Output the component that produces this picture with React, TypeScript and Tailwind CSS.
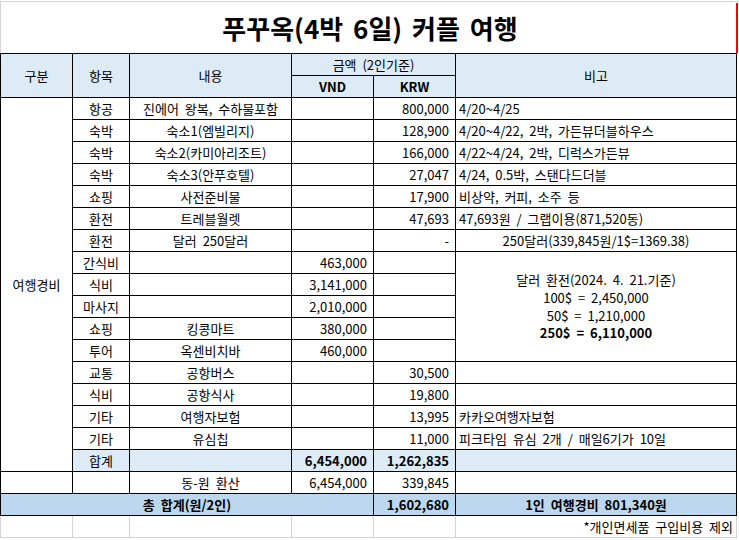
import React from "react";

type Row = {
	item: string;
	desc: string;
	vnd: string;
	krw: string;
	note?: string;
	noteCenter?: boolean;
};

const rows: Row[] = [
	{ item: "항공", desc: "진에어 왕복, 수하물포함", vnd: "", krw: "800,000", note: "4/20~4/25" },
	{ item: "숙박", desc: "숙소1(엠빌리지)", vnd: "", krw: "128,900", note: "4/20~4/22, 2박, 가든뷰더블하우스" },
	{ item: "숙박", desc: "숙소2(카미아리조트)", vnd: "", krw: "166,000", note: "4/22~4/24, 2박, 디럭스가든뷰" },
	{ item: "숙박", desc: "숙소3(안푸호텔)", vnd: "", krw: "27,047", note: "4/24, 0.5박, 스탠다드더블" },
	{ item: "쇼핑", desc: "사전준비물", vnd: "", krw: "17,900", note: "비상약, 커피, 소주 등" },
	{ item: "환전", desc: "트레블월렛", vnd: "", krw: "47,693", note: "47,693원 / 그랩이용(871,520동)" },
	{ item: "환전", desc: "달러 250달러", vnd: "", krw: "-", note: "250달러(339,845원/1$=1369.38)", noteCenter: true },
];

// rows sharing the merged exchange-rate note
const cashRows: Row[] = [
	{ item: "간식비", desc: "", vnd: "463,000", krw: "" },
	{ item: "식비", desc: "", vnd: "3,141,000", krw: "" },
	{ item: "마사지", desc: "", vnd: "2,010,000", krw: "" },
	{ item: "쇼핑", desc: "킹콩마트", vnd: "380,000", krw: "" },
	{ item: "투어", desc: "옥센비치바", vnd: "460,000", krw: "" },
];

const tailRows: Row[] = [
	{ item: "교통", desc: "공항버스", vnd: "", krw: "30,500", note: "" },
	{ item: "식비", desc: "공항식사", vnd: "", krw: "19,800", note: "" },
	{ item: "기타", desc: "여행자보험", vnd: "", krw: "13,995", note: "카카오여행자보험" },
	{ item: "기타", desc: "유심칩", vnd: "", krw: "11,000", note: "피크타임 유심 2개 / 매일6기가 10일" },
];

const cell = "border border-black p-0 h-[22px] whitespace-nowrap align-middle";
const center = `${cell} text-center`;
const right = `${cell} text-right pr-[6px]`;
const left = `${cell} text-left pl-[3px]`;
const head = `${center} bg-[#ddebf7] font-normal`;
const grid = "border-x border-b border-[#d4d4d4] h-[22px] p-0";

export default function App() {
	return (
		<div className="w-[739px] h-[540px] bg-white text-black text-[13px] leading-none [word-spacing:3px] font-['Noto_Sans_CJK_KR','Noto_Sans',sans-serif] pt-[1px] overflow-hidden">
			<div className="relative h-[52px] border-t border-l border-[#d4d4d4] flex items-center justify-center">
				<h1 className="text-[26px] font-bold [word-spacing:4px] pt-[1px]">푸꾸옥(4박 6일) 커플 여행</h1>
				<div className="absolute right-[1px] top-[1px] bottom-0 w-[2px] bg-[#ff0000]" />
			</div>

			<table className="table-fixed border-collapse w-[736px]">
				<colgroup>
					<col className="w-[72px]" />
					<col className="w-[57px]" />
					<col className="w-[162px]" />
					<col className="w-[82px]" />
					<col className="w-[82px]" />
					<col className="w-[281px]" />
				</colgroup>
				<thead>
					<tr>
						<th rowSpan={2} className={head}>구분</th>
						<th rowSpan={2} className={head}>항목</th>
						<th rowSpan={2} className={head}>내용</th>
						<th colSpan={2} className={head}>금액 (2인기준)</th>
						<th rowSpan={2} className={head}>비고</th>
					</tr>
					<tr>
						<th className={`${center} bg-[#ddebf7] font-bold`}>VND</th>
						<th className={`${center} bg-[#ddebf7] font-bold`}>KRW</th>
					</tr>
				</thead>
				<tbody>
					{rows.map((r, i) => (
						<tr key={`a${i}`}>
							{i === 0 && (
								<td rowSpan={17} className={center}>여행경비</td>
							)}
							<td className={center}>{r.item}</td>
							<td className={center}>{r.desc}</td>
							<td className={right}>{r.vnd}</td>
							<td className={right}>{r.krw}</td>
							<td className={r.noteCenter ? center : left}>{r.note}</td>
						</tr>
					))}
					{cashRows.map((r, i) => (
						<tr key={`b${i}`}>
							<td className={center}>{r.item}</td>
							<td className={center}>{r.desc}</td>
							<td className={right}>{r.vnd}</td>
							<td className={right}>{r.krw}</td>
							{i === 0 && (
								<td rowSpan={5} className={`${center} leading-[17.7px]`}>
									<div>달러 환전(2024. 4. 21.기준)</div>
									<div>100$ = 2,450,000</div>
									<div>50$ = 1,210,000</div>
									<div className="font-bold">250$ = 6,110,000</div>
								</td>
							)}
						</tr>
					))}
					{tailRows.map((r, i) => (
						<tr key={`c${i}`}>
							<td className={center}>{r.item}</td>
							<td className={center}>{r.desc}</td>
							<td className={right}>{r.vnd}</td>
							<td className={right}>{r.krw}</td>
							<td className={left}>{r.note}</td>
						</tr>
					))}
					<tr className="bg-[#ddebf7]">
						<td className={center}>합계</td>
						<td className={center}></td>
						<td className={`${right} font-bold`}>6,454,000</td>
						<td className={`${right} font-bold`}>1,262,835</td>
						<td className={left}></td>
					</tr>
					<tr>
						<td className={center}></td>
						<td className={center}></td>
						<td className={center}>동-원 환산</td>
						<td className={right}>6,454,000</td>
						<td className={right}>339,845</td>
						<td className={left}></td>
					</tr>
					<tr className="bg-[#bdd7ee] font-bold">
						<td colSpan={4} className={center}>총 합계(원/2인)</td>
						<td className={right}>1,602,680</td>
						<td className={center}>1인 여행경비 801,340원</td>
					</tr>
					<tr>
						<td className={grid}></td>
						<td className={grid}></td>
						<td className={grid}></td>
						<td className={grid}></td>
						<td className={grid}></td>
						<td className={`${grid} text-right pr-[3px] whitespace-nowrap`}>
							*개인면세품 구입비용 제외
						</td>
					</tr>
				</tbody>
			</table>
		</div>
	);
}
